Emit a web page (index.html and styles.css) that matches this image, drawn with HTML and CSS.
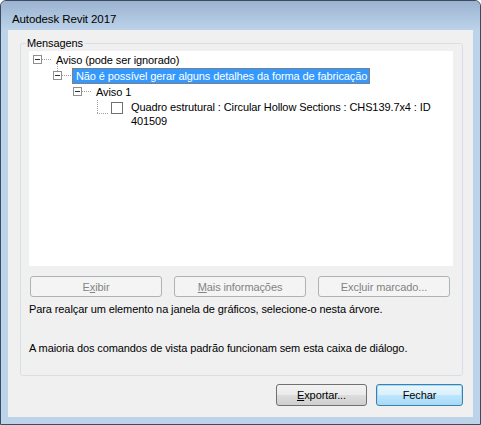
FILE: index.html
```html
<!DOCTYPE html>
<html lang="pt">
<head>
<meta charset="utf-8">
<title>Autodesk Revit 2017</title>
<link rel="stylesheet" href="styles.css">
</head>
<body>
<div class="window">
  <div class="titlebar">Autodesk Revit 2017</div>
  <div class="client">
    <fieldset class="group">
      <legend class="group-label">Mensagens</legend>
      <div class="tree">
        <div class="row">
          <svg class="lines" width="23" height="16" viewBox="0 0 23 16">
            <rect x="4.5" y="3.5" width="8" height="8" fill="#fff" stroke="#8e8f8f"/>
            <rect x="6" y="7" width="5" height="1" fill="#303030"/>
            <line x1="13" y1="7.5" x2="23" y2="7.5" stroke="#a0a0a0" stroke-dasharray="1 1"/>
          </svg>
          <span class="label">Aviso (pode ser ignorado)</span>
        </div>
        <div class="row">
          <svg class="lines" width="43" height="16" viewBox="0 0 43 16">
            <line x1="28.5" y1="-4" x2="28.5" y2="3" stroke="#a0a0a0" stroke-dasharray="1 1"/>
            <rect x="24.5" y="3.5" width="8" height="8" fill="#fff" stroke="#8e8f8f"/>
            <rect x="26" y="7" width="5" height="1" fill="#303030"/>
            <line x1="33" y1="7.5" x2="43" y2="7.5" stroke="#a0a0a0" stroke-dasharray="1 1"/>
          </svg>
          <span class="label selected">Não é possível gerar alguns detalhes da forma de fabricação</span>
        </div>
        <div class="row">
          <svg class="lines" width="63" height="16" viewBox="0 0 63 16">
            <rect x="44.5" y="3.5" width="8" height="8" fill="#fff" stroke="#8e8f8f"/>
            <rect x="46" y="7" width="5" height="1" fill="#303030"/>
            <line x1="53" y1="7.5" x2="63" y2="7.5" stroke="#a0a0a0" stroke-dasharray="1 1"/>
          </svg>
          <span class="label">Aviso 1</span>
        </div>
        <div class="row tall">
          <svg class="lines" width="99" height="28" viewBox="0 0 99 28">
            <line x1="68.5" y1="0" x2="68.5" y2="13" stroke="#a0a0a0" stroke-dasharray="1 1"/>
            <line x1="68" y1="13.5" x2="80" y2="13.5" stroke="#a0a0a0" stroke-dasharray="1 1"/>
            <rect x="82.5" y="2.5" width="11" height="11" fill="#fff" stroke="#707070"/>
          </svg>
          <span class="label">Quadro estrutural : Circular Hollow Sections : CHS139.7x4 : ID<br>401509</span>
        </div>
      </div>
      <div class="actions">
        <button class="btn disabled" type="button">E<u>x</u>ibir</button>
        <button class="btn disabled" type="button"><u>M</u>ais informações</button>
        <button class="btn disabled" type="button">Exc<u>l</u>uir marcado...</button>
      </div>
      <p class="hint">Para realçar um elemento na janela de gráficos, selecione-o nesta árvore.</p>
      <p class="hint second">A maioria dos comandos de vista padrão funcionam sem esta caixa de diálogo.</p>
    </fieldset>
    <div class="footer">
      <button class="btn push export" type="button"><u>E</u>xportar...</button>
      <button class="btn push default" type="button">Fechar</button>
    </div>
  </div>
</div>
</body>
</html>
```
FILE: styles.css
```css
* { box-sizing: border-box; }
html, body { margin: 0; padding: 0; background: #fff; }
body {
  font-family: "Segoe UI", "Liberation Sans", Arial, sans-serif;
  font-size: 11px;
  letter-spacing: -0.1px;
  color: #000;
}
.window {
  width: 481px;
  height: 425px;
  border: 1px solid #3a4c60;
  border-radius: 6px 6px 0 0;
  background: #bcd3ea;
  padding: 0 7px 7px 7px;
  display: flex;
  flex-direction: column;
  overflow: hidden;
}
.titlebar {
  height: 29px;
  margin: 0 -7px;
  padding: 11px 0 0 11px;
  background: linear-gradient(#9bb3d0, #bcd3ea);
  font-size: 11.5px;
  line-height: 15px;
  border-radius: 5px 5px 0 0;
}
.client {
  flex: 1;
  background: #f0f0f0;
  padding: 5px 10px 0 12px;
  display: flex;
  flex-direction: column;
}
.group {
  margin: 0;
  padding: 0 9px 19px 8px;
  border: 1px solid #d5dfe5;
  border-radius: 3px;
  min-inline-size: 0;
}
.group-label {
  padding: 0 1px;
  margin-left: -3px;
  line-height: 17px;
}
.tree {
  background: #fff;
  height: 215px;
  margin-top: -1px;
  padding-top: 1px;
}
.row {
  display: flex;
  align-items: flex-start;
  height: 16px;
  line-height: 16px;
  white-space: nowrap;
}
.row.tall {
  height: 28px;
  line-height: 14px;
}
.lines {
  flex: none;
  display: block;
  overflow: visible;
}
.label {
  padding: 0 3px 0 3px;
  border: 1px solid transparent;
  height: 16px;
  line-height: 14px;
}
.row.tall .label {
  border: 0;
  padding: 0 0 0 3px;
  height: auto;
  line-height: 14px;
}
.label.selected {
  background: #3399ff;
  color: #fff;
  border: 1px dotted #cc6600;
  padding-right: 2px;
}
.actions {
  display: flex;
  gap: 12px;
  padding-left: 1px;
  margin-top: 10px;
}
.btn {
  font: inherit;
  letter-spacing: inherit;
  margin: 0;
  padding: 0;
  border-radius: 3px;
  text-align: center;
}
.btn.disabled {
  width: 132px;
  height: 21px;
  border: 1px solid #adb2b5;
  background: #f4f4f4;
  color: #838383;
}
.hint {
  margin: 5px 0 0 0;
  line-height: 15px;
}
.hint.second {
  margin-top: 24px;
}
.footer {
  display: flex;
  justify-content: flex-end;
  gap: 9px;
  margin-top: 8px;
}
.btn.push {
  height: 22px;
  border: 1px solid #707070;
  background: linear-gradient(#f2f2f2 0%, #ebebeb 50%, #dddddd 50%, #cfcfcf 100%);
  color: #000;
}
.btn.export { width: 91px; }
.btn.default {
  width: 87px;
  border-color: #3c7fb1;
  box-shadow: inset 0 0 0 1px #a5dcf5;
  background: linear-gradient(#eaf6fd 0%, #d9f0fc 50%, #bee6fd 50%, #a7d9f5 100%);
}
u { text-decoration: underline; text-underline-offset: 1px; }
```
